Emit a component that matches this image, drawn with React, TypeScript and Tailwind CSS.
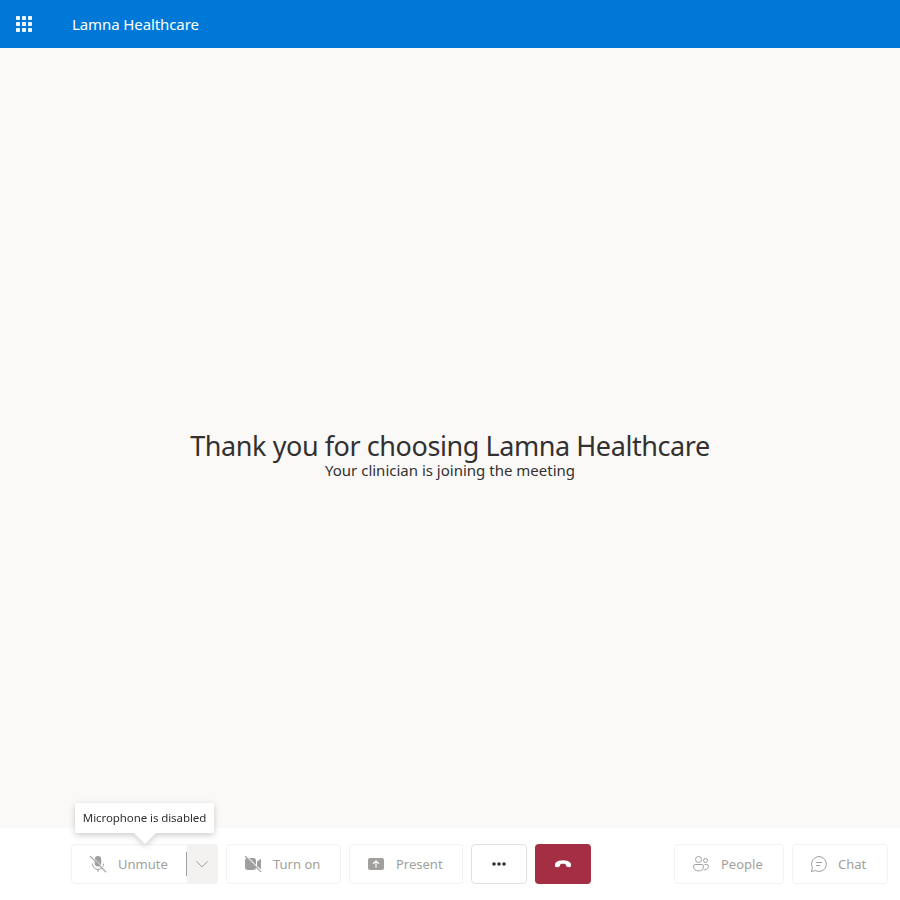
import type { ReactNode } from "react";

function WaffleIcon() {
  return (
    <svg width="16" height="16" viewBox="0 0 16 16" fill="#fff">
      {[0, 6, 12].map((y) =>
        [0, 6, 12].map((x) => <rect key={`${x}-${y}`} x={x + 0.1} y={y + 0.1} width="3.8" height="3.8" />)
      )}
    </svg>
  );
}

function MicOffIcon() {
  return (
    <svg width="20" height="20" viewBox="0 0 20 20" fill="none" stroke="#a19f9d">
      <rect x="6.8" y="2" width="6.4" height="10.4" rx="3.2" fill="#a19f9d" stroke="none" />
      <path d="M4.500 10a5.500 5.500 0 0 0 11 0M10 15.500V17.700" strokeLinecap="round" />
      <path d="M3.200 1.800 19 17.600" stroke="#fff" strokeWidth="0.9" />
      <path d="M2.400 2.400 17.800 17.800" strokeLinecap="round" strokeWidth="1.200" />
    </svg>
  );
}

function VideoOffIcon() {
  return (
    <svg width="20" height="20" viewBox="0 0 20 20" fill="#a19f9d">
      <rect x="2" y="4" width="11" height="12" rx="2.400" />
      <path d="M14 7.500 17.200 5.200c.4-.3.8-.1.8.4v8.800c0 .5-.4.700-.8.400L14 12.500Z" />
      <path d="M2.800 1.700 18.400 17.300" stroke="#fff" strokeWidth="1.200" />
      <path d="M2.300 2.300 17.700 17.700" stroke="#a19f9d" strokeWidth="1.200" strokeLinecap="round" />
    </svg>
  );
}

function PresentIcon() {
  return (
    <svg width="20" height="20" viewBox="0 0 20 20" fill="none">
      <rect x="2" y="4" width="16" height="12" rx="2" fill="#a19f9d" />
      <path d="M10 13.300V7M7.300 9.500 10 6.800l2.700 2.700" stroke="#fff" strokeWidth="1.100" strokeLinecap="round" strokeLinejoin="round" />
    </svg>
  );
}

function MoreIcon() {
  return (
    <svg width="20" height="20" viewBox="0 0 20 20" fill="#323130">
      <circle cx="5" cy="10" r="1.8" />
      <circle cx="10" cy="10" r="1.8" />
      <circle cx="15" cy="10" r="1.8" />
    </svg>
  );
}

function HangUpIcon() {
  return (
    <svg width="20" height="20" viewBox="0 0 20 20" fill="#fff">
      <path d="M18 10.800 17.900 12c-.1.800-.9 1.300-1.700 1.200l-1.700-.3c-.7-.1-1.200-.6-1.400-1.200l-.5-1.500c-.8-.3-1.700-.4-2.600-.4s-1.800.1-2.600.4l-.5 1.500c-.2.600-.7 1.100-1.400 1.200l-1.700.3c-.8.100-1.600-.4-1.700-1.200L2 10.800c-.1-.9.200-1.800.9-2.400C4.500 7 7 6.200 10 6.200s5.500.800 7.100 2.200c.7.600 1 1.500.9 2.400Z" />
    </svg>
  );
}

function PeopleIcon() {
  return (
    <svg width="20" height="20" viewBox="0 0 20 20" fill="none" stroke="#a19f9d">
      <circle cx="7.500" cy="5.500" r="3" />
      <circle cx="14.500" cy="6.500" r="2" />
      <path d="M4.200 10.500H10.800A1.700 1.700 0 0 1 12.500 12.200C12.500 15.200 10.500 16.900 7.500 16.900S2.500 15.200 2.500 12.200A1.700 1.700 0 0 1 4.200 10.500Z" />
      <path d="M14 10.500H15.800A1.700 1.700 0 0 1 17.500 12.200C17.500 14.400 16 15.700 14 15.700 13.700 15.700 13.400 15.700 13.100 15.600" strokeLinecap="round" />
    </svg>
  );
}

function ChatIcon() {
  return (
    <svg width="20" height="20" viewBox="0 0 20 20" fill="none" stroke="#a19f9d" strokeLinecap="round" strokeLinejoin="round">
      <path d="M10 2.500A7.500 7.500 0 1 1 6.400 16.600L2.500 17.500 3.400 13.600A7.500 7.500 0 0 1 10 2.500Z" />
      <path d="M7.500 8.500h5M7.500 11.500h3" />
    </svg>
  );
}

function ChevronDownIcon() {
  return (
    <svg width="14" height="14" viewBox="0 0 14 14" fill="none" stroke="#a19f9d">
      <path d="M1.500 4.500 7 9.800l5.500-5.300" />
    </svg>
  );
}

function CallButton({ icon, label, className }: { icon: ReactNode; label: string; className: string }) {
  return (
    <button disabled className={`flex h-10 items-center rounded border border-[#f3f2f1] bg-white pl-4 text-[13px] whitespace-nowrap text-[#a19f9d] ${className}`}>
      {icon}
      <span className="pt-0.5">{label}</span>
    </button>
  );
}

export default function App() {
  return (
    <div className="flex h-[900px] w-[900px] flex-col overflow-hidden bg-white font-['Noto_Sans','Open_Sans',sans-serif] text-[#323130]">
      <header className="flex h-12 shrink-0 items-center bg-[#0078d7] text-white">
        <div className="flex w-12 justify-center">
          <WaffleIcon />
        </div>
        <h1 className="ml-6 text-[15px] leading-5 tracking-[-0.1px]">Lamna Healthcare</h1>
      </header>

      <main className="flex flex-1 flex-col items-center justify-center bg-[#faf9f8] pt-9 whitespace-nowrap">
        <h2 className="text-[27px] leading-7 tracking-[-0.43px]">Thank you for choosing Lamna Healthcare</h2>
        <p className="text-[15px] leading-5">Your clinician is joining the meeting</p>
      </main>

      <footer className="flex h-18 shrink-0 items-center justify-between pr-3 pl-[71px]">
        <div className="flex gap-2">
          <div className="relative flex h-10 w-[147px] overflow-visible rounded border border-[#f3f2f1]">
            <button disabled className="flex w-[115px] items-center gap-[10px] pl-4 text-[13px] text-[#a19f9d]">
              <MicOffIcon />
              <span className="pt-0.5">Unmute</span>
            </button>
            <button disabled className="flex flex-1 items-center justify-center bg-[#f3f2f1]">
              <span className="-ml-px h-6 w-px bg-[#a19f9d]" />
              <span className="flex flex-1 justify-center">
                <ChevronDownIcon />
              </span>
            </button>
            <div className="absolute -top-[42px] left-[3px] flex h-[30px] w-[139px] items-center justify-center rounded-[2px] bg-white text-[11.5px] whitespace-nowrap drop-shadow-[0_2px_3px_rgba(0,0,0,0.2)]">
              <span className="tracking-[-0.08px]">Microphone is disabled</span>
              <svg className="absolute top-full left-[59px]" width="22" height="11" viewBox="0 0 22 11" fill="#fff">
                <path d="M0 0h22L11 11Z" />
              </svg>
            </div>
          </div>
          <CallButton icon={<VideoOffIcon />} label="Turn on" className="w-[115px] gap-[10px]" />
          <CallButton icon={<PresentIcon />} label="Present" className="w-[114px] gap-[10px]" />
          <button className="flex h-10 w-14 items-center justify-center rounded border border-[#e1dfdd]">
            <MoreIcon />
          </button>
          <button className="flex h-10 w-14 items-center justify-center rounded bg-[#a42e43]">
            <HangUpIcon />
          </button>
        </div>
        <div className="flex gap-2">
          <CallButton icon={<PeopleIcon />} label="People" className="w-[110px] gap-[10px]" />
          <CallButton icon={<ChatIcon />} label="Chat" className="w-24 gap-[9px]" />
        </div>
      </footer>
    </div>
  );
}
